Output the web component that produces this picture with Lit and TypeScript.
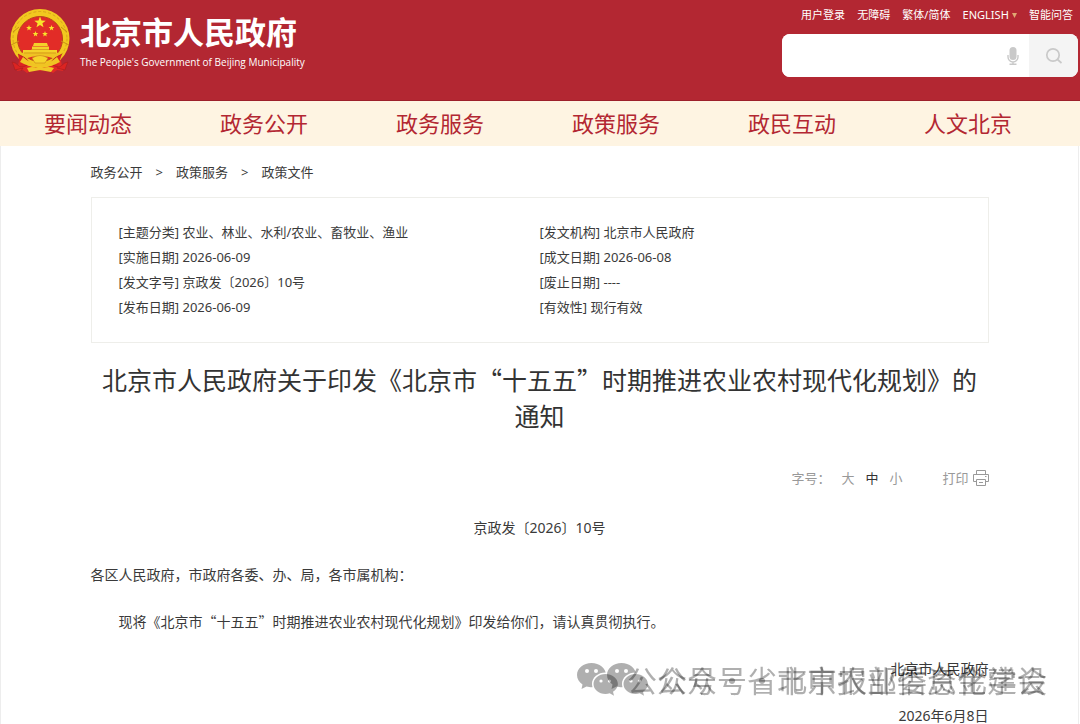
import { LitElement, html, css, svg } from "lit";
import { customElement, state } from "lit/decorators.js";

const NAV = ["要闻动态", "政务公开", "政务服务", "政策服务", "政民互动", "人文北京"];
const CRUMBS = ["政务公开", "政策服务", "政策文件"];
const META: [string, string][] = [
  ["主题分类", "农业、林业、水利/农业、畜牧业、渔业"],
  ["发文机构", "北京市人民政府"],
  ["实施日期", "2026-06-09"],
  ["成文日期", "2026-06-08"],
  ["发文字号", "京政发〔2026〕10号"],
  ["废止日期", "----"],
  ["发布日期", "2026-06-09"],
  ["有效性", "现行有效"],
];
const SIZES = ["大", "中", "小"];
const MARKS = ["公众号・省市申报部委资金建设", "公众号・北京农业信息化学会"];

const starPoints = (cx: number, cy: number, r: number) =>
  Array.from({ length: 10 }, (_, i) => {
    const a = -Math.PI / 2 + (i * Math.PI) / 5;
    const k = i % 2 ? r * 0.42 : r;
    return `${(cx + Math.cos(a) * k).toFixed(2)},${(cy + Math.sin(a) * k).toFixed(2)}`;
  }).join(" ");

@customElement("gov-emblem")
class GovEmblem extends LitElement {
  static styles = css`
    :host { display: block; flex: none; }
    .art { display: block; width: 60px; height: 66px; }
  `;
  render() {
    return html`<svg class="art" viewBox="0 0 60 66" aria-hidden="true">
      <path d="M10 48 L7 63 L13 62 L17 65 L24 61 L30 63 L36 61 L43 65 L47 62 L53 63 L50 48z" fill="#e02a25"/>
      <ellipse cx="30" cy="30.5" rx="29.5" ry="29.5" fill="#f2c81f"/>
      <ellipse cx="30" cy="30.5" rx="27" ry="27" fill="none" stroke="#d9a31c" stroke-width="1" stroke-dasharray="3 2"/>
      <circle cx="30" cy="31" r="22.500" fill="#e22c27" stroke="#b8431b" stroke-width="1"/>
      <path d="M1 37 L9 33 M59 37 L51 33 M3 24 L9 19 M57 24 L51 19" stroke="#c88f17" fill="none"/>
      ${[[30, 14.5, 6], [19, 20, 3], [41.5, 20, 3], [25.5, 26, 3], [35, 26, 3]].map(
        ([x, y, r]) => svg`<polygon points=${starPoints(x, y, r)} fill="#f8e32b"/>`
      )}
      <path d="M24 35h13l1 3h-15zM22 38.5h17v3.500h-17zM13 42h34v3h-34z" fill="#f4d12a"/>
      <path d="M10 45 Q30 43 50 45 L46 51 Q30 45 14 51z" fill="#efc323"/>
      <path d="M21 41.500h18M14 45h32" stroke="#cf8d1b" stroke-width=".7"/>
      <path d="M8 46 Q16 49 20 55 Q12 61 9 58 Q5 54 2 54 Q4 58 5 62 L13 60 L11 63 M52 46 Q44 49 40 55 Q48 61 51 58 Q55 54 58 54 Q56 58 55 62 L47 60" fill="#dc2422" stroke="#a41d1f" stroke-width=".6"/>
      <path d="M13 49 Q22 57 30 56 Q38 57 47 49 L50 54 Q39 60 30 58 Q21 60 10 54z" fill="#f0c423"/>
      <path d="M22 50 Q30 45 38 50 L35 55 H25z" fill="#f6d42b" stroke="#c9801d" stroke-width=".6"/>
      <path d="M17 60 Q23 58 26 60 Q30 57 34 60 Q38 58 44 60 L41 64 L30 62 L19 64z" fill="#f1c626"/>
    </svg>`;
  }
}

@customElement("app-root")
class AppRoot extends LitElement {
  @state() private size = "中";

  static styles = css`
    :host {
      display: block;
      position: relative;
      background: #fff;
      color: #3a3a3a;
      font-family: "Noto Sans", "Noto Sans CJK SC", sans-serif;
      font-size: 13px;
    }
    * { box-sizing: border-box; }
    a { color: inherit; text-decoration: none; }
    button { font: inherit; border: 0; padding: 0; background: none; color: inherit; cursor: pointer; }
    h1, h2, p, ul, ol, dl, dd { margin: 0; padding: 0; font-weight: 400; list-style: none; }

    .top {
      display: flex;
      justify-content: space-between;
      padding: 8px 2px 23px 10px;
      background: #b32732;
      border-bottom: 1px solid #9d202b;
      color: #fff;
    }
    .brand { display: flex; gap: 10px; }
    .name { font: 700 31px/46px "Noto Sans CJK SC", sans-serif; }
    .sub { font: 10px/16px "Open Sans", sans-serif; }
    .tools { width: 296px; }
    .links { display: flex; justify-content: space-between; padding: 0 5px 0 19px; font-size: 11px; line-height: 14px; }
    .lang { display: flex; align-items: center; gap: 3px; }
    .search {
      display: flex;
      height: 43px;
      margin-top: 12px;
      border-radius: 8px;
      overflow: hidden;
      background: #fff;
    }
    .query { flex: 1; min-width: 0; border: 0; outline: 0; padding: 0 12px; font: inherit; font-size: 14px; }
    .mic { width: 33px; display: grid; place-items: center; }
    .go { width: 49px; display: grid; place-items: center; background: #f4f4f4; }

    .nav {
      display: grid;
      grid-template-columns: repeat(6, 1fr);
      padding-right: 24px;
      background: #fef4e2;
      color: #b32732;
      font-size: 22px;
      line-height: 45px;
      text-align: center;
    }

    .page { margin-right: 1px; border: solid #ededed; border-width: 0 1px; }
    .wrap { max-width: 898px; margin: 0 auto; }
    .crumbs { display: flex; gap: 13px; padding: 16px 0 15px; line-height: 20px; }
    .meta {
      display: grid;
      grid-template-columns: 1fr 1fr;
      padding: 22px 27px;
      border: 1px solid #eeeeea;
      line-height: 25px;
    }
    .title {
      margin-top: 18px;
      color: #333;
      font: 25px/36px "Noto Sans CJK SC", sans-serif;
      text-align: center;
    }
    .bar { display: flex; justify-content: flex-end; margin-top: 35px; line-height: 20px; color: #999; }
    .sizes { display: flex; gap: 11px; margin-right: 40px; }
    .on { color: #333; }
    .print { display: flex; align-items: center; gap: 4px; }
    .text {
      display: grid;
      gap: 20px;
      margin-top: 26px;
      font-size: 14px;
      line-height: 27px;
    }
    .no { text-align: center; }
    .cjk { font-family: "Noto Sans CJK SC", sans-serif; }
    .indent { text-indent: 2em; }
    .sign { text-align: right; }

    .marks {
      position: absolute;
      top: 658px;
      right: 33px;
      display: grid;
      justify-items: end;
      color: #000;
      pointer-events: none;
    }
    .mark {
      grid-area: 1 / 1;
      display: flex;
      align-items: center;
      gap: 8px;
      opacity: .31;
      font: 30px/42px "Noto Sans CJK SC", sans-serif;
      white-space: nowrap;
    }
  `;

  private wechat(i: number) {
    return html`<svg width="42" height="34" viewBox="0 0 42 34" aria-hidden="true">
      <defs>
        <mask id="big${i}">
          <rect width="42" height="34" fill="#fff"/>
          <ellipse cx="28.500" cy="22" rx="13.500" ry="11.500" fill="#000"/>
          <circle cx="10" cy="9" r="2" fill="#000"/><circle cx="19" cy="9" r="2" fill="#000"/>
        </mask>
        <mask id="small${i}">
          <rect width="42" height="34" fill="#fff"/>
          <circle cx="24" cy="19" r="1.600" fill="#000"/><circle cx="32.500" cy="19" r="1.600" fill="#000"/>
        </mask>
      </defs>
      <path mask="url(#big${i})" d="M14.500 1C6.500 1 0 6.200 0 13c0 4 2 7 5.500 9.400L4.500 27l5-2.600c2 .5 3.500.8 5 .8C22.500 25 29 20 29 13S22.500 1 14.500 1z"/>
      <path mask="url(#small${i})" d="M28.500 12C21.800 12 16.500 16.500 16.500 22s5.300 10 12 10c1.500 0 3-.3 4.200-.7l4.300 2.400-1-3.900c3-2 4.900-4.600 4.900-7.800 0-5.500-5.600-10-12.400-10z"/>
    </svg>`;
  }

  render() {
    return html`
      <header class="top">
        <div class="brand">
          <gov-emblem></gov-emblem>
          <div>
            <div class="name">北京市人民政府</div>
            <div class="sub">The People's Government of Beijing Municipality</div>
          </div>
        </div>
        <div class="tools">
          <div class="links">
            <a href="#">用户登录</a><a href="#">无障碍</a><a href="#">繁体/简体</a>
            <a class="lang" href="#">ENGLISH
              <svg width="5" height="5" viewBox="0 0 5 5" aria-hidden="true"><path d="M0 0h5L2.500 5z" fill="#e0a772"/></svg>
            </a>
            <a href="#">智能问答</a>
          </div>
          <form class="search" @submit=${(e: Event) => e.preventDefault()}>
            <input class="query" type="text" aria-label="搜索" />
            <button class="mic" type="button" aria-label="语音">
              <svg width="12" height="20" viewBox="0 0 12 20" fill="none" stroke="#c9c9c9" stroke-width="1.4">
                <rect x="2.500" y="1" width="7" height="13" rx="3.500" fill="#c9c9c9" stroke="none"/>
                <path d="M1 9v2a5 5 0 0 0 10 0V9M6 16V18M2.500 18.200h7"/>
              </svg>
            </button>
            <button class="go" aria-label="搜索">
              <svg width="18" height="18" viewBox="0 0 18 18" fill="none" stroke="#c9c9c9" stroke-width="1.700">
                <circle cx="8" cy="8" r="6.200"/><path d="M12.500 12.500l4 3.500"/>
              </svg>
            </button>
          </form>
        </div>
      </header>
      <nav class="nav">${NAV.map((n) => html`<a href="#">${n}</a>`)}</nav>
      <main class="page">
        <div class="wrap">
          <div class="crumbs">
            ${CRUMBS.map((c, i) => html`${i ? html`<span>&gt;</span>` : ""}<a href="#">${c}</a>`)}
          </div>
          <ul class="meta">${META.map(([k, v]) => html`<li>[${k}] ${v}</li>`)}</ul>
          <h1 class="title">北京市人民政府关于印发《北京市“十五五”时期推进农业农村现代化规划》的通知</h1>
          <div class="bar">
            <div class="sizes">
              <span>字号：</span>
              ${SIZES.map(
                (s) => html`<button class=${s === this.size ? "on" : ""} @click=${() => (this.size = s)}>${s}</button>`
              )}
            </div>
            <button class="print">打印
              <svg width="16" height="16" viewBox="0 0 16 16" fill="none" stroke="#999">
                <path d="M3.500 4.500v-4h9v4M3.500 11.500h-3v-7h15v7h-3M3.500 9.500h9v6h-9zM6 12.500h4M12 6.500h1.500"/>
              </svg>
            </button>
          </div>
          <article class="text">
            <p class="no">京政发〔2026〕10号</p>
            <p class="cjk">各区人民政府，市政府各委、办、局，各市属机构：</p>
            <p class="cjk indent">现将《北京市“十五五”时期推进农业农村现代化规划》印发给你们，请认真贯彻执行。</p>
            <p class="sign">北京市人民政府</p>
            <p class="sign">2026年6月8日</p>
          </article>
        </div>
      </main>
      <div class="marks">
        ${MARKS.map((m, i) => html`<div class="mark">${this.wechat(i)}<span>${m}</span></div>`)}
      </div>
    `;
  }
}
